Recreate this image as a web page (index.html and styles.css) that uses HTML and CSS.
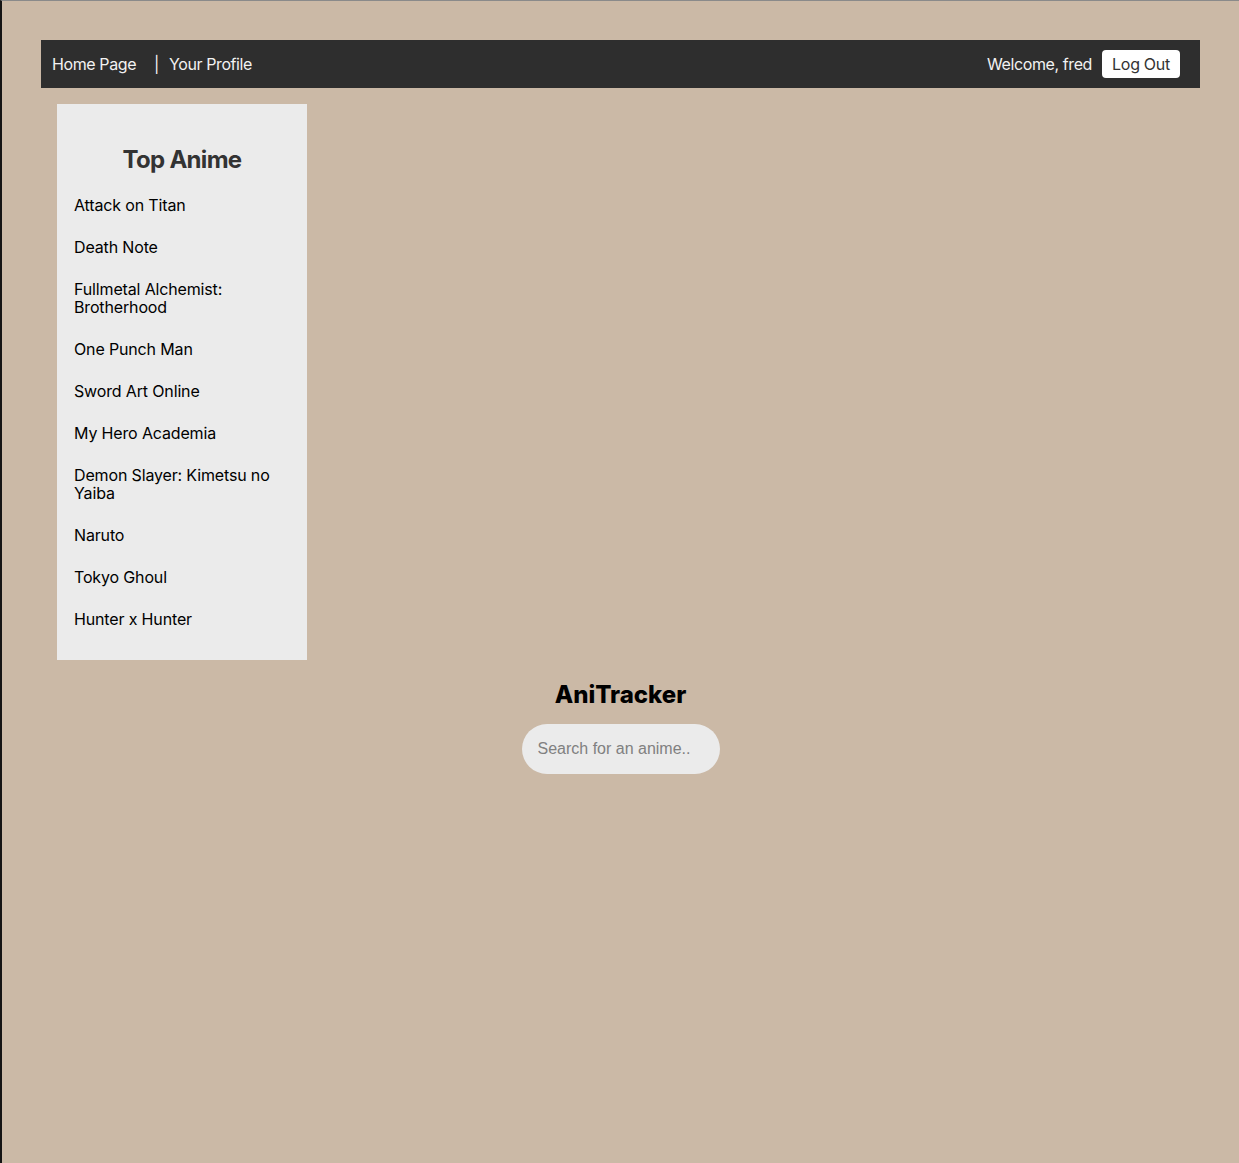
FILE: index.html
```html
<!DOCTYPE html>
<html lang="en">
<head>
<meta charset="utf-8">
<title>AniTracker</title>
<link rel="stylesheet" href="styles.css">
</head>
<body>
<div class="page">
  <nav class="navbar">
    <div class="nav-left">
      <a class="nav-link home" href="#">Home Page</a>
      <span class="sep">|</span>
      <a class="nav-link" href="#">Your Profile</a>
    </div>
    <div class="nav-right">
      <span class="welcome">Welcome, fred</span>
      <button class="logout">Log Out</button>
    </div>
  </nav>
  <aside class="sidebar">
    <h2 class="sidebar-title">Top Anime</h2>
    <ul class="anime-list">
      <li>Attack on Titan</li>
      <li>Death Note</li>
      <li>Fullmetal Alchemist: Brotherhood</li>
      <li>One Punch Man</li>
      <li>Sword Art Online</li>
      <li>My Hero Academia</li>
      <li>Demon Slayer: Kimetsu no Yaiba</li>
      <li>Naruto</li>
      <li>Tokyo Ghoul</li>
      <li>Hunter x Hunter</li>
    </ul>
  </aside>
  <main class="main">
    <h1 class="brand">AniTracker</h1>
    <input class="search" type="text" placeholder="Search for an anime..">
  </main>
</div>
</body>
</html>
```
FILE: styles.css
```css
html, body {
  margin: 0;
  padding: 0;
}
body {
  background: #cbb9a6;
  font-family: Inter, "Noto Sans", sans-serif;
  min-height: 1163px;
  border-left: 2px solid #141414;
  border-top: 1px solid #8a8a8a;
  box-sizing: border-box;
}
.page {
  padding: 39px 39px 0 39px;
}
.navbar {
  height: 48px;
  background: #2e2e2e;
  display: flex;
  align-items: center;
  justify-content: space-between;
  padding: 0 20px 0 11px;
  color: #f2f2f2;
  font-size: 16px;
  letter-spacing: -0.4px;
}
.nav-left {
  display: flex;
  align-items: center;
}
.nav-link {
  color: #f2f2f2;
  text-decoration: none;
}
.home {
  margin-right: 18px;
}
.sep {
  margin-right: 10px;
}
.nav-right {
  display: flex;
  align-items: center;
}
.welcome {
  margin-right: 10px;
}
.logout {
  font-family: Inter, "Noto Sans", sans-serif;
  font-size: 16px;
  letter-spacing: -0.3px;
  color: #333;
  background: #fff;
  border: none;
  border-radius: 4px;
  height: 28px;
  width: 78px;
  padding: 0;
}
.sidebar {
  width: 250px;
  margin: 16px 0 0 16px;
  background: #ebebeb;
  padding: 41px 17px 32px 17px;
  box-sizing: border-box;
}
.sidebar-title {
  margin: 0 0 21px 0;
  font-size: 24px;
  line-height: 30px;
  font-weight: 700;
  letter-spacing: -0.7px;
  text-align: center;
  color: #333;
}
.anime-list {
  list-style: none;
  margin: 0;
  padding: 0;
  display: flex;
  flex-direction: column;
  gap: 24px;
}
.anime-list li {
  font-size: 16px;
  line-height: 18px;
  letter-spacing: -0.15px;
  color: #000;
}
.main {
  display: flex;
  flex-direction: column;
  align-items: center;
}
.brand {
  margin: 20px 0 14px 0;
  font-size: 24px;
  line-height: 30px;
  font-weight: 800;
  color: #000;
}
.search {
  width: 198px;
  height: 50px;
  box-sizing: border-box;
  border: none;
  border-radius: 25px;
  background: #ebebeb;
  padding: 0 16px;
  font-family: "Liberation Sans", Arial, sans-serif;
  font-size: 16px;
  outline: none;
}
.search::placeholder {
  color: #808080;
}
```
